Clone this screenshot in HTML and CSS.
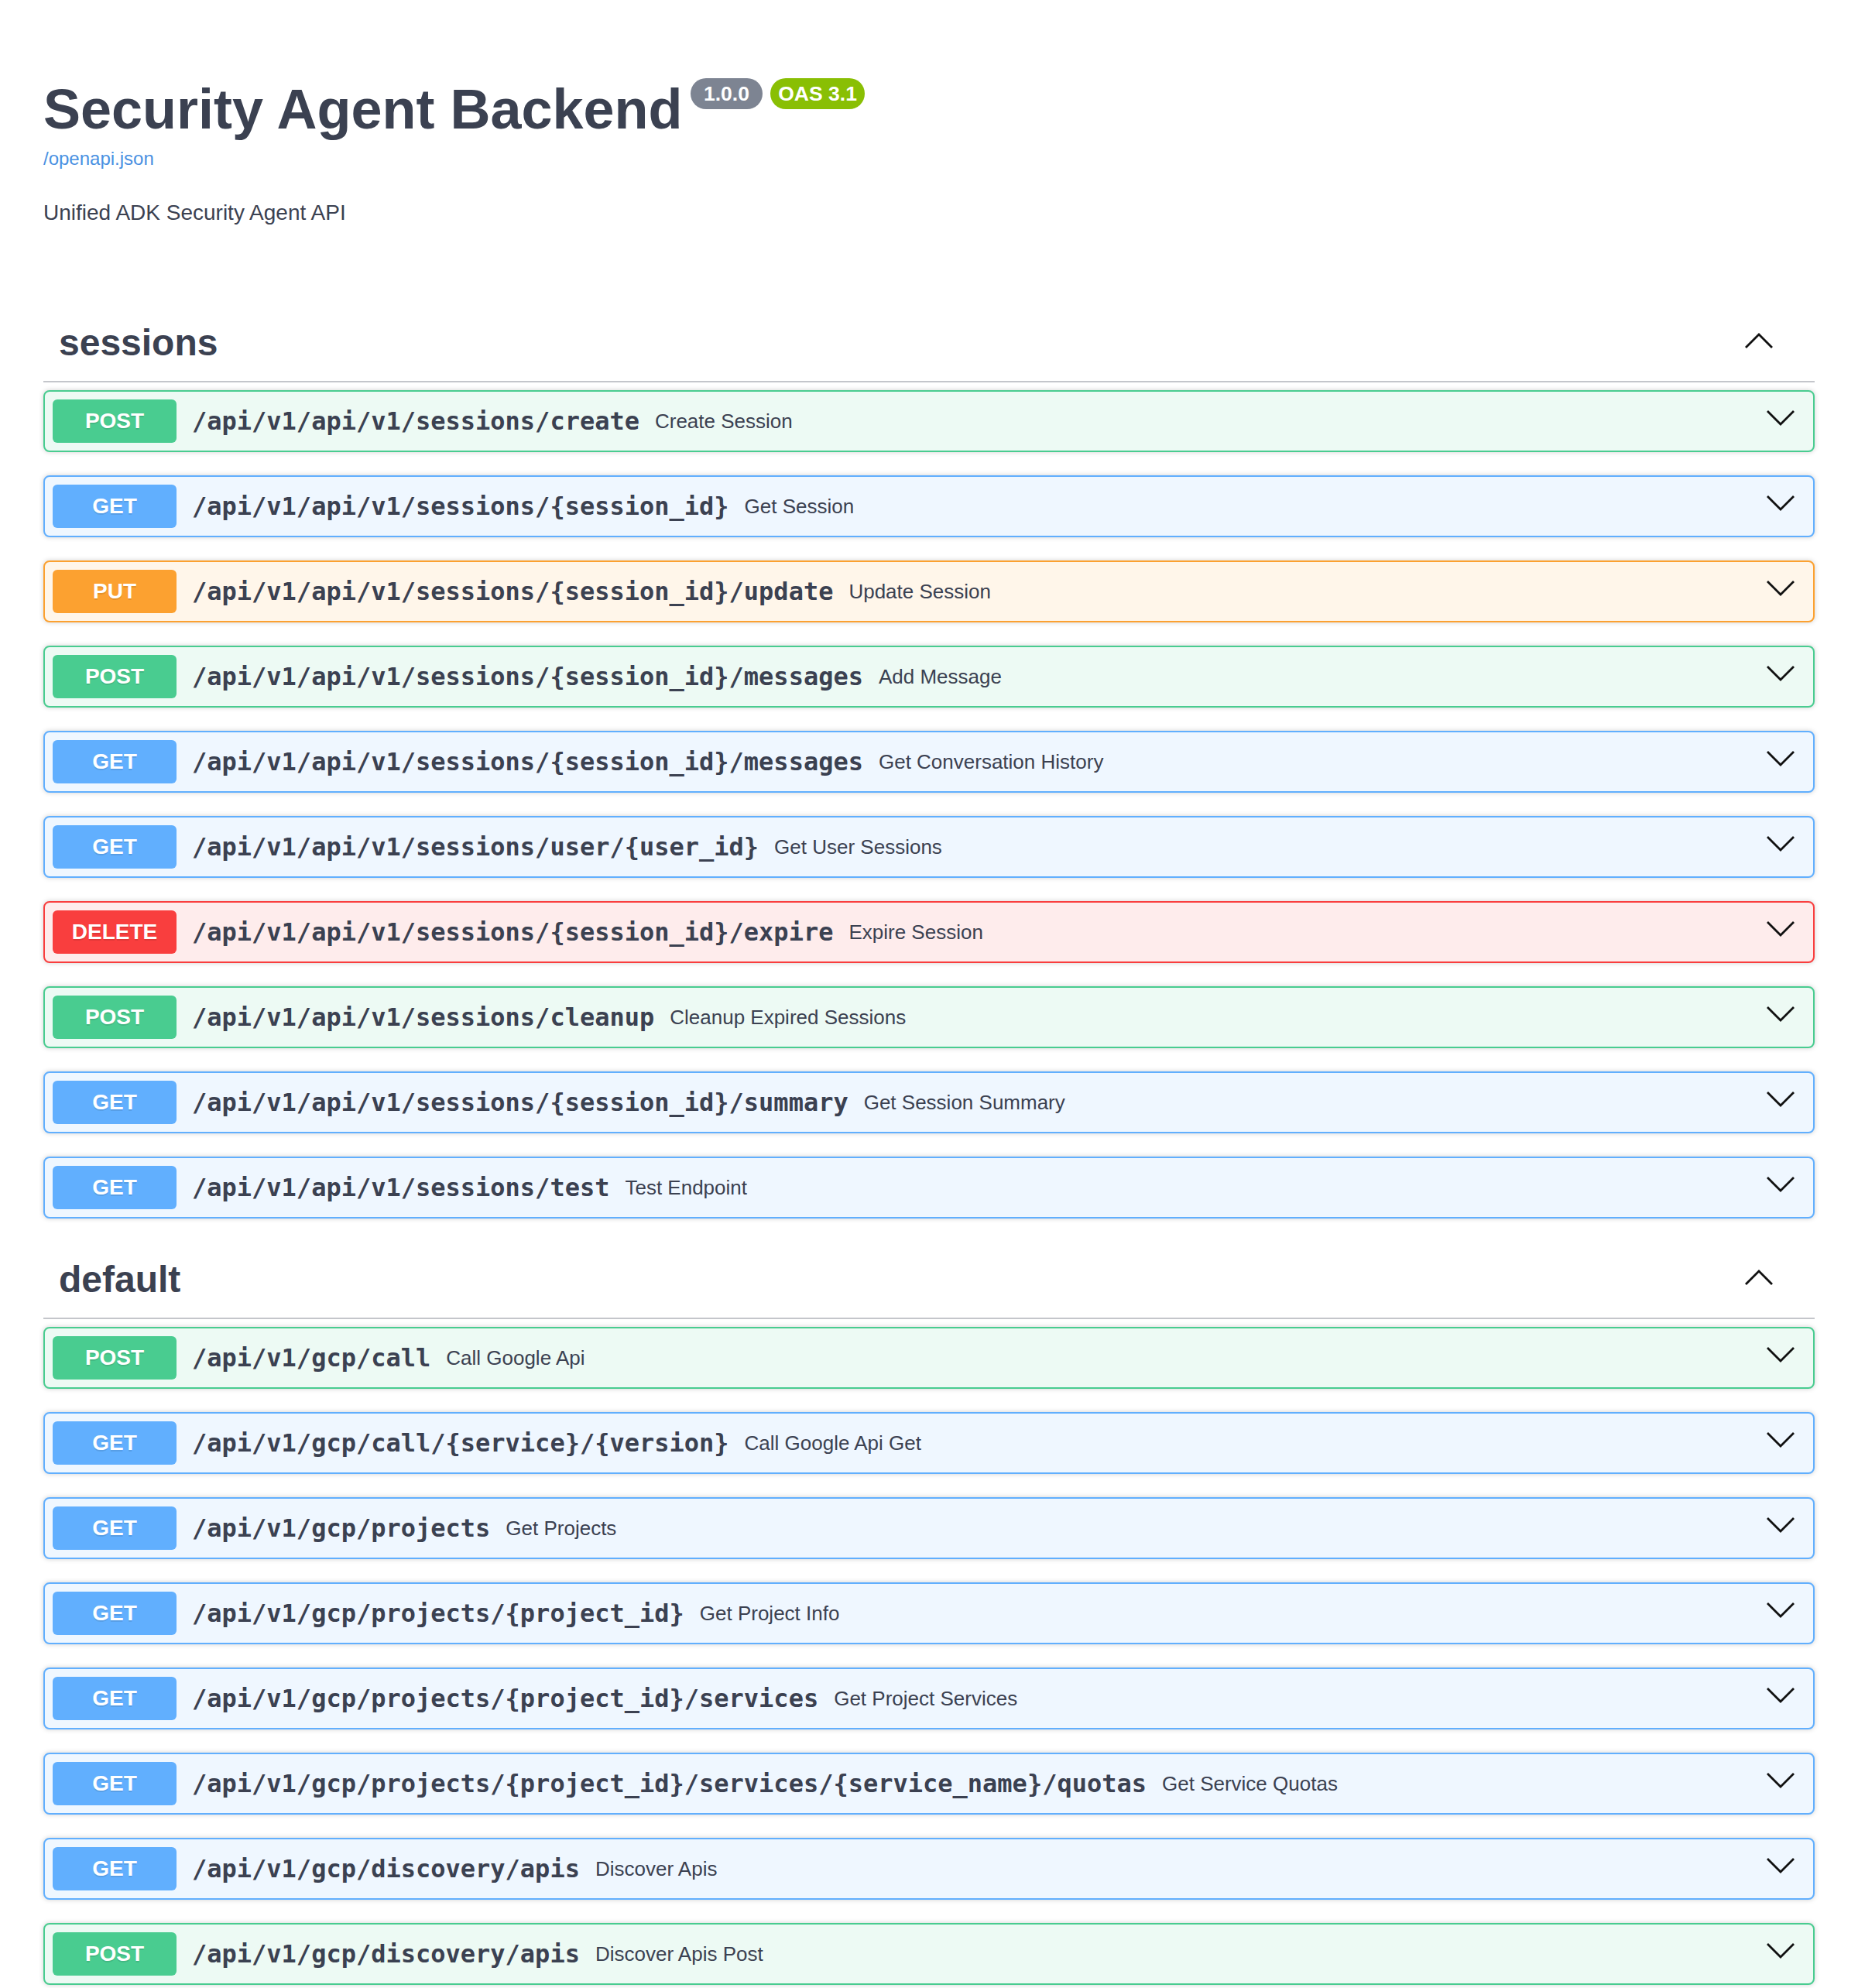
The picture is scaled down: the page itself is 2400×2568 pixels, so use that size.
FILE: index.html
```html
<!DOCTYPE html>
<html lang="en">
<head>
<meta charset="utf-8">
<title>Security Agent Backend - Swagger UI</title>
<link rel="stylesheet" href="styles.css">
</head>
<body>
<div class="wrapper">
  <section class="info">
    <h2 class="title">Security Agent Backend<span class="stamps"><small class="stamp ver"><span class="stamp-text"> 1.0.0 </span></small><small class="stamp oas"><span class="stamp-text">OAS 3.1</span></small></span></h2>
    <a class="url" href="#">/openapi.json</a>
    <p class="description">Unified ADK Security Agent API</p>
  </section>

  <section class="tag-section">
    <h3 class="tag"><span class="tag-name">sessions</span><svg class="arrow-up" viewBox="0 0 40 40" width="40" height="40"><polyline points="3,29 20,12 37,29"/></svg></h3>
    <div class="ops">
      <div class="op post"><span class="method">POST</span><span class="path">/api/v1/api/v1/sessions/create</span><span class="desc">Create Session</span><svg class="arrow-down" viewBox="0 0 40 40" width="40" height="40"><polyline points="3,11 20,28 37,11"/></svg></div>
      <div class="op get"><span class="method">GET</span><span class="path">/api/v1/api/v1/sessions/{session_id}</span><span class="desc">Get Session</span><svg class="arrow-down" viewBox="0 0 40 40" width="40" height="40"><polyline points="3,11 20,28 37,11"/></svg></div>
      <div class="op put"><span class="method">PUT</span><span class="path">/api/v1/api/v1/sessions/{session_id}/update</span><span class="desc">Update Session</span><svg class="arrow-down" viewBox="0 0 40 40" width="40" height="40"><polyline points="3,11 20,28 37,11"/></svg></div>
      <div class="op post"><span class="method">POST</span><span class="path">/api/v1/api/v1/sessions/{session_id}/messages</span><span class="desc">Add Message</span><svg class="arrow-down" viewBox="0 0 40 40" width="40" height="40"><polyline points="3,11 20,28 37,11"/></svg></div>
      <div class="op get"><span class="method">GET</span><span class="path">/api/v1/api/v1/sessions/{session_id}/messages</span><span class="desc">Get Conversation History</span><svg class="arrow-down" viewBox="0 0 40 40" width="40" height="40"><polyline points="3,11 20,28 37,11"/></svg></div>
      <div class="op get"><span class="method">GET</span><span class="path">/api/v1/api/v1/sessions/user/{user_id}</span><span class="desc">Get User Sessions</span><svg class="arrow-down" viewBox="0 0 40 40" width="40" height="40"><polyline points="3,11 20,28 37,11"/></svg></div>
      <div class="op delete"><span class="method">DELETE</span><span class="path">/api/v1/api/v1/sessions/{session_id}/expire</span><span class="desc">Expire Session</span><svg class="arrow-down" viewBox="0 0 40 40" width="40" height="40"><polyline points="3,11 20,28 37,11"/></svg></div>
      <div class="op post"><span class="method">POST</span><span class="path">/api/v1/api/v1/sessions/cleanup</span><span class="desc">Cleanup Expired Sessions</span><svg class="arrow-down" viewBox="0 0 40 40" width="40" height="40"><polyline points="3,11 20,28 37,11"/></svg></div>
      <div class="op get"><span class="method">GET</span><span class="path">/api/v1/api/v1/sessions/{session_id}/summary</span><span class="desc">Get Session Summary</span><svg class="arrow-down" viewBox="0 0 40 40" width="40" height="40"><polyline points="3,11 20,28 37,11"/></svg></div>
      <div class="op get"><span class="method">GET</span><span class="path">/api/v1/api/v1/sessions/test</span><span class="desc">Test Endpoint</span><svg class="arrow-down" viewBox="0 0 40 40" width="40" height="40"><polyline points="3,11 20,28 37,11"/></svg></div>
    </div>
  </section>

  <section class="tag-section">
    <h3 class="tag"><span class="tag-name">default</span><svg class="arrow-up" viewBox="0 0 40 40" width="40" height="40"><polyline points="3,29 20,12 37,29"/></svg></h3>
    <div class="ops">
      <div class="op post"><span class="method">POST</span><span class="path">/api/v1/gcp/call</span><span class="desc">Call Google Api</span><svg class="arrow-down" viewBox="0 0 40 40" width="40" height="40"><polyline points="3,11 20,28 37,11"/></svg></div>
      <div class="op get"><span class="method">GET</span><span class="path">/api/v1/gcp/call/{service}/{version}</span><span class="desc">Call Google Api Get</span><svg class="arrow-down" viewBox="0 0 40 40" width="40" height="40"><polyline points="3,11 20,28 37,11"/></svg></div>
      <div class="op get"><span class="method">GET</span><span class="path">/api/v1/gcp/projects</span><span class="desc">Get Projects</span><svg class="arrow-down" viewBox="0 0 40 40" width="40" height="40"><polyline points="3,11 20,28 37,11"/></svg></div>
      <div class="op get"><span class="method">GET</span><span class="path">/api/v1/gcp/projects/{project_id}</span><span class="desc">Get Project Info</span><svg class="arrow-down" viewBox="0 0 40 40" width="40" height="40"><polyline points="3,11 20,28 37,11"/></svg></div>
      <div class="op get"><span class="method">GET</span><span class="path">/api/v1/gcp/projects/{project_id}/services</span><span class="desc">Get Project Services</span><svg class="arrow-down" viewBox="0 0 40 40" width="40" height="40"><polyline points="3,11 20,28 37,11"/></svg></div>
      <div class="op get"><span class="method">GET</span><span class="path">/api/v1/gcp/projects/{project_id}/services/{service_name}/quotas</span><span class="desc">Get Service Quotas</span><svg class="arrow-down" viewBox="0 0 40 40" width="40" height="40"><polyline points="3,11 20,28 37,11"/></svg></div>
      <div class="op get"><span class="method">GET</span><span class="path">/api/v1/gcp/discovery/apis</span><span class="desc">Discover Apis</span><svg class="arrow-down" viewBox="0 0 40 40" width="40" height="40"><polyline points="3,11 20,28 37,11"/></svg></div>
      <div class="op post"><span class="method">POST</span><span class="path">/api/v1/gcp/discovery/apis</span><span class="desc">Discover Apis Post</span><svg class="arrow-down" viewBox="0 0 40 40" width="40" height="40"><polyline points="3,11 20,28 37,11"/></svg></div>
    </div>
  </section>
</div>
</body>
</html>
```

FILE: styles.css
```css
html, body {
  margin: 0;
  padding: 0;
  background: #ffffff;
}

body {
  font-family: "Liberation Sans", Arial, sans-serif;
  color: #3b4151;
}

.wrapper {
  padding: 0 56px;
}

/* ---------- info ---------- */
.info {
  padding: 99px 0 103px;
  display: flex;
  flex-direction: column;
  align-items: flex-start;
}

.title {
  margin: 0;
  font-size: 72px;
  line-height: 84px;
  font-weight: 700;
  color: #3b4151;
  white-space: nowrap;
}

.stamps {
  display: inline;
}

.stamp {
  display: inline-block;
  margin-left: 10px;
  padding: 4px 10px;
  border-radius: 114px;
  font-size: 26.5px;
  line-height: 32px;
  font-weight: 700;
  color: #ffffff;
  vertical-align: 36px;
}

.stamp-text {
  white-space: pre;
}

.stamp.ver {
  background: #7d8492;
}

.stamp.oas {
  background: #89bf04;
}

.url {
  margin-top: 8px;
  font-size: 24px;
  line-height: 28px;
  color: #4990e2;
  text-decoration: none;
}

.description {
  margin: 40px 0 0;
  font-size: 28px;
  line-height: 32px;
  color: #3b4151;
}

/* ---------- tag sections ---------- */
.tag-section {
  display: flex;
  flex-direction: column;
}

.tag {
  display: flex;
  align-items: center;
  margin: 0 0 10px;
  padding: 20px 52px 20px 20px;
  border-bottom: 2px solid #c4c6cb;
  font-size: 48px;
  line-height: 58px;
  font-weight: 700;
  color: #3b4151;
}

.tag-name {
  flex: 1 1 auto;
}

.arrow-up,
.arrow-down {
  flex: 0 0 auto;
  fill: none;
  stroke: #111111;
  stroke-width: 2.8;
  stroke-linejoin: miter;
}

.arrow-up {
  margin-bottom: 6px;
}

.ops {
  display: flex;
  flex-direction: column;
}

/* ---------- operation blocks ---------- */
.op {
  display: flex;
  align-items: center;
  margin: 0 0 30px;
  padding: 10px 22px 10px 10px;
  border: 2px solid;
  border-radius: 8px;
  box-shadow: 0 0 6px rgba(0, 0, 0, 0.19);
}

.method {
  flex: 0 0 auto;
  min-width: 160px;
  padding: 12px 0;
  border-radius: 6px;
  font-size: 28px;
  line-height: 32px;
  font-weight: 700;
  color: #ffffff;
  text-align: center;
  text-shadow: 0 2px 0 rgba(0, 0, 0, 0.1);
}

.path {
  flex: 0 0 auto;
  padding: 0 20px;
  font-family: "DejaVu Sans Mono", "Liberation Mono", monospace;
  font-size: 32px;
  font-weight: 700;
  color: #3b4151;
}

.desc {
  flex: 1 1 auto;
  font-size: 26px;
  color: #3b4151;
}

.arrow-down {
  margin-bottom: 8px;
}

.op.post {
  border-color: #49cc90;
  background: #edfaf4;
}
.op.post .method {
  background: #49cc90;
}

.op.get {
  border-color: #61affe;
  background: #eff7ff;
}
.op.get .method {
  background: #61affe;
}

.op.put {
  border-color: #fca130;
  background: #fff6ea;
}
.op.put .method {
  background: #fca130;
}

.op.delete {
  border-color: #f93e3e;
  background: #feecec;
}
.op.delete .method {
  background: #f93e3e;
}
```
